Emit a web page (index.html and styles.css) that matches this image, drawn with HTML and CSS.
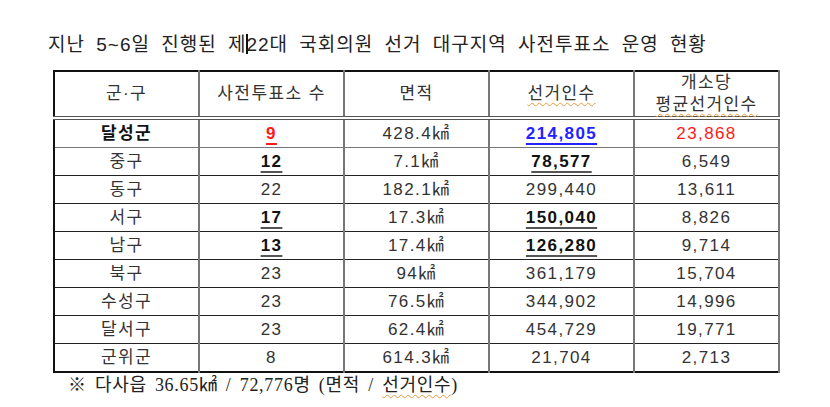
FILE: index.html
```html
<!DOCTYPE html>
<html lang="ko">
<head>
<meta charset="utf-8">
<link rel="stylesheet" href="styles.css">
</head>
<body>
<div class="page">
  <h1 class="title">지난 5~6일 진행된 제<span class="caret"></span>22대 국회의원 선거 대구지역 사전투표소 운영 현황</h1>
  <table class="stats">
    <colgroup><col><col><col><col><col></colgroup>
    <thead>
      <tr>
        <th>군·구</th>
        <th>사전투표소 수</th>
        <th>면적</th>
        <th><span class="spell">선거인수</span></th>
        <th>개소당<br><span class="spell">평균선거인수</span></th>
      </tr>
    </thead>
    <tbody>
      <tr><td class="b">달성군</td><td><span class="b u red">9</span></td><td>428.4㎢</td><td><span class="b u blue">214,805</span></td><td><span class="red">23,868</span></td></tr>
      <tr><td>중구</td><td><span class="b u">12</span></td><td>7.1㎢</td><td><span class="b u">78,577</span></td><td>6,549</td></tr>
      <tr><td>동구</td><td>22</td><td>182.1㎢</td><td>299,440</td><td>13,611</td></tr>
      <tr><td>서구</td><td><span class="b u">17</span></td><td>17.3㎢</td><td><span class="b u">150,040</span></td><td>8,826</td></tr>
      <tr><td>남구</td><td><span class="b u">13</span></td><td>17.4㎢</td><td><span class="b u">126,280</span></td><td>9,714</td></tr>
      <tr><td>북구</td><td>23</td><td>94㎢</td><td>361,179</td><td>15,704</td></tr>
      <tr><td>수성구</td><td>23</td><td>76.5㎢</td><td>344,902</td><td>14,996</td></tr>
      <tr><td>달서구</td><td>23</td><td>62.4㎢</td><td>454,729</td><td>19,771</td></tr>
      <tr><td>군위군</td><td>8</td><td>614.3㎢</td><td>21,704</td><td>2,713</td></tr>
    </tbody>
  </table>
  <p class="note">※ 다사읍 36.65㎢ / 72,776명 (면적 / <span class="spell">선거인수</span>)</p>
</div>
</body>
</html>
```
FILE: styles.css
```css
html, body {
  margin: 0;
  padding: 0;
  background: #ffffff;
}
.page {
  width: 830px;
  height: 407px;
  padding: 33px 0 0 48px;
  box-sizing: border-box;
  font-family: "Liberation Sans", "Noto Sans CJK KR", sans-serif;
  color: #333333;
}
.title {
  margin: 0;
  font-size: 19px;
  font-weight: 400;
  line-height: 24px;
  letter-spacing: 1px;
  word-spacing: 5px;
  color: #222222;
  white-space: nowrap;
}
.caret {
  display: inline-block;
  width: 2px;
  height: 20px;
  background: #111;
  vertical-align: -3px;
  margin-right: -2px;
}
.stats {
  margin: 13px 0 0 5px;
  width: 724px;
  table-layout: fixed;
  border-collapse: collapse;
  border: 2px solid #111111;
}
.stats col {
  width: 145px;
}
.stats th,
.stats td {
  padding: 0;
  text-align: center;
  font-size: 17px;
  letter-spacing: 1.4px;
  border-right: 2px solid #777777;
}
.stats th {
  height: 43px;
  font-weight: 400;
  line-height: 22px;
  color: #333;
  border-bottom: 4px double #555555;
}
.stats td {
  height: 27px;
  line-height: 20px;
  border-bottom: 1px solid #222222;
}
.stats tbody tr:first-child td {
  border-bottom-color: #777;
}
.b { font-weight: 700; color: #111; }
.u {
  text-decoration: underline;
  text-underline-offset: 4px;
  text-decoration-thickness: 2px;
  text-decoration-color: #555;
}
.red { color: #ff1a1a; }
.blue { color: #2323ff; }
.u.red, .u.blue { text-decoration-color: currentColor; }
.spell {
  text-decoration: underline wavy #e89a3c;
  text-decoration-thickness: 1px;
  text-underline-offset: 3px;
}
.note {
  margin: 0 0 0 20px;
  font-family: "Liberation Serif", "Noto Sans CJK KR", serif;
  font-size: 18px;
  line-height: 24px;
  letter-spacing: 0.7px;
  word-spacing: 3px;
  color: #222;
}
```
